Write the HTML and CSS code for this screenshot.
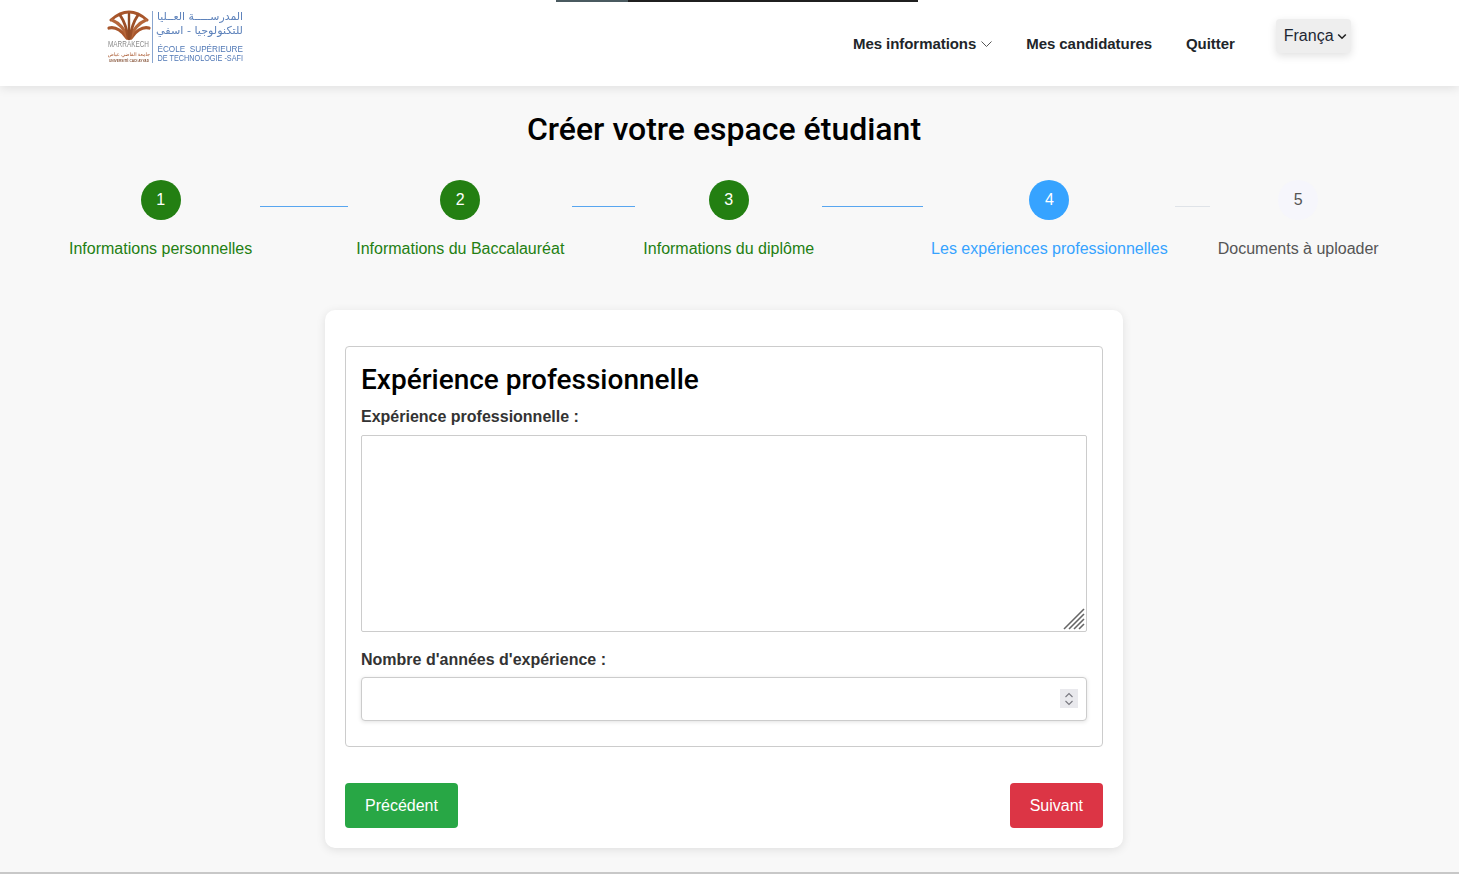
FILE: index.html
```html
<!DOCTYPE html>
<html lang="fr">
<head>
<meta charset="utf-8">
<title>Créer votre espace étudiant</title>
<link rel="stylesheet" href="styles.css">
</head>
<body>
<div class="loader"><span class="loader-a"></span><span class="loader-b"></span></div>
<header class="header">
  <a class="logo" href="#">
    <svg class="logo-svg" width="170" height="56" viewBox="0 0 170 56">
      <g fill="none" stroke-linecap="round">
        <path d="M4 10Q22 -6 40 10" stroke="#a8562c" stroke-width="3"/>
        <path d="M20 28C16 22 9 16 2 18" stroke="#a8562c" stroke-width="3.200"/>
        <path d="M24 28C28 22 35 16 42 18" stroke="#a8562c" stroke-width="3.200"/>
        <path d="M20.500 28C18 20 12 13 5 10" stroke="#b5663a" stroke-width="3"/>
        <path d="M23.500 28C26 20 32 13 39 10" stroke="#b5663a" stroke-width="3"/>
        <path d="M21 28C20 19 17 11 13 5" stroke="#9c4f28" stroke-width="2.800"/>
        <path d="M23 28C24 19 27 11 31 5" stroke="#9c4f28" stroke-width="2.800"/>
        <path d="M22 29V4" stroke="#8f4a25" stroke-width="2.400"/>
      </g>
      <text class="logo-city" x="1" y="37" textLength="41" lengthAdjust="spacingAndGlyphs">MARRAKECH</text>
      <text class="logo-ar" x="22" y="46" text-anchor="middle">جامعة القاضي عياض</text>
      <text class="logo-uca" x="2" y="52" textLength="40" lengthAdjust="spacingAndGlyphs">UNIVERSITÉ CADI AYYAD</text>
      <rect class="logo-sep" x="45" y="1" width="1" height="52"/>
      <text class="logo-ar-line" x="50" y="10" textLength="86" lengthAdjust="spacingAndGlyphs">المدرســـــة العــليا</text>
      <text class="logo-ar-line" x="49" y="23.500" textLength="87" lengthAdjust="spacingAndGlyphs">للتكنولوجيا - اسفي</text>
      <text class="logo-fr" x="50.500" y="41.500" textLength="85.500" lengthAdjust="spacingAndGlyphs">ÉCOLE&#160;&#160;SUPÉRIEURE</text>
      <text class="logo-fr" x="50.500" y="51" textLength="85.500" lengthAdjust="spacingAndGlyphs">DE TECHNOLOGIE -SAFI</text>
    </svg>
  </a>
  <nav class="nav">
    <a class="nav-link" href="#">Mes informations
      <svg class="nav-chevron" width="11" height="8" viewBox="0 0 11 8"><path d="M.5 1.500l5 5 5-5" fill="none" stroke="#555" stroke-width="1"/></svg>
    </a>
    <a class="nav-link" href="#">Mes candidatures</a>
    <a class="nav-link" href="#">Quitter</a>
  </nav>
  <div class="lang">
    <span>França</span>
    <svg width="10" height="7" viewBox="0 0 10 7"><path d="M1.200 1.500L5 5.200l3.800-3.700" fill="none" stroke="#222" stroke-width="1.600"/></svg>
  </div>
</header>
<main class="page">
  <h1 class="title">Créer votre espace étudiant</h1>
  <ol class="stepper">
    <li class="step done"><span class="dot">1</span><span class="step-label">Informations personnelles</span></li>
    <li class="line line-1"></li>
    <li class="step done"><span class="dot">2</span><span class="step-label">Informations du Baccalauréat</span></li>
    <li class="line line-2"></li>
    <li class="step done"><span class="dot">3</span><span class="step-label">Informations du diplôme</span></li>
    <li class="line line-3"></li>
    <li class="step active"><span class="dot">4</span><span class="step-label">Les expériences professionnelles</span></li>
    <li class="line line-4 todo-line"></li>
    <li class="step todo"><span class="dot">5</span><span class="step-label">Documents à uploader</span></li>
  </ol>
  <section class="card">
    <div class="box">
      <h2 class="box-title">Expérience professionnelle</h2>
      <label class="field-label" for="exp">Expérience professionnelle :</label>
      <div class="area-wrap">
        <textarea class="area" id="exp"></textarea>
        <svg class="grip" width="24" height="24" viewBox="0 0 24 24">
          <g stroke="#666" stroke-width="1.600">
            <path d="M2 22L22 2"/><path d="M7 22L22 7"/><path d="M12 22L22 12"/><path d="M17 22L22 17"/>
          </g>
        </svg>
      </div>
      <label class="field-label field-label-2" for="years">Nombre d'années d'expérience :</label>
      <div class="num-wrap">
        <input class="num" id="years" type="text">
        <span class="spin">
          <svg width="10" height="14" viewBox="0 0 10 14"><path d="M1.500 5L5 1.500 8.500 5M1.500 9L5 12.500 8.500 9" fill="none" stroke="#77777f" stroke-width="1.100"/></svg>
        </span>
      </div>
    </div>
    <div class="actions">
      <button class="btn btn-prev" type="button">Précédent</button>
      <button class="btn btn-next" type="button">Suivant</button>
    </div>
  </section>
</main>
<div class="bottom-rule"></div>
</body>
</html>
```
FILE: styles.css
```css
* { box-sizing: border-box; }
html, body { margin: 0; height: 874px; overflow: hidden; }
body {
  position: relative;
  background: #f8f8f8;
  font-family: "Liberation Sans", Arial, sans-serif;
  color: #212529;
}
.loader { position: absolute; top: 0; left: 556px; display: flex; height: 2px; z-index: 5; }
.loader-a { width: 72px; background: #4a5a60; }
.loader-b { width: 290px; background: #1f1f1f; }

.header {
  height: 86px;
  background: #fff;
  box-shadow: 0 2px 10px rgba(0, 0, 0, .1);
  display: flex;
  align-items: flex-start;
  padding-left: 107px;
  position: relative;
}
.logo { display: block; margin-top: 10px; width: 137px; height: 56px; text-decoration: none; }
.logo-svg { display: block; filter: blur(.25px); }
.logo-city { font: 9.500px "Liberation Sans", sans-serif; fill: #8a8a8a; }
.logo-ar { font: 5px "Noto Sans", "DejaVu Sans", sans-serif; fill: #a8562c; }
.logo-uca { font: bold 4px "Liberation Sans", sans-serif; fill: #8a5a40; }
.logo-sep { fill: #8aa6cf; }
.logo-ar-line { font: 11px "DejaVu Sans", sans-serif; fill: #5d82bb; }
.logo-fr { font: 8.500px "Liberation Sans", sans-serif; fill: #4f77b5; }

.nav { display: flex; gap: 34px; margin: 35px 0 0 609px; }
.nav-link {
  font: 700 15px/18px "Liberation Sans", Arial, sans-serif;
  letter-spacing: -.06px;
  color: #212529;
  text-decoration: none;
  display: flex;
  align-items: center;
  gap: 5px;
  white-space: nowrap;
}
.lang {
  width: 75px;
  height: 34px;
  margin: 19px 0 0 41px;
  padding: 0 4px 0 8px;
  background: #eee;
  border-radius: 4px;
  box-shadow: 0 3px 8px rgba(0, 0, 0, .12);
  display: flex;
  align-items: center;
  gap: 3px;
  font-size: 16px;
  color: #1d2733;
  overflow: hidden;
}

.page { width: 1448px; }
.title {
  margin: 24px 0 0;
  font: 500 32px/38px Roboto, sans-serif;
  color: #000;
  text-align: center;
}
.stepper {
  list-style: none;
  margin: 32px 0 0;
  padding: 0 0 0 69px;
  display: flex;
  align-items: flex-start;
}
.step { display: flex; flex-direction: column; align-items: center; flex: none; }
.dot {
  width: 40px;
  height: 40px;
  border-radius: 50%;
  display: flex;
  align-items: center;
  justify-content: center;
  font-size: 16px;
  color: #fff;
}
.step-label { margin-top: 19px; font-size: 16px; line-height: 20px; white-space: nowrap; }
.done .dot { background: #237f12; }
.done .step-label { color: #237f12; }
.active .dot { background: #36a3ff; }
.active .step-label { color: #36a3ff; }
.todo .dot { background: #f6f6fc; color: #555; }
.todo .step-label { color: #555; }
.line { height: 1px; margin: 26px 8px 0; background: #58a6f0; flex: none; }
.line-1 { width: 88px; }
.line-2 { width: 63px; }
.line-3 { width: 101px; }
.line-4 { width: 35px; margin-left: 7px; }
.todo-line { background: #dfe3e8; }

.card {
  width: 798px;
  height: 538px;
  margin: 51px auto 0;
  padding: 36px 20px 20px;
  background: #fff;
  border-radius: 10px;
  box-shadow: 0 2px 10px rgba(0, 0, 0, .1);
}
.box {
  height: 401px;
  padding: 15px;
  border: 1px solid #ccc;
  border-radius: 4px;
}
.box-title { margin: 0; font: 500 28px/36px Roboto, sans-serif; color: #000; }
.field-label { display: block; margin-top: 7px; font: 700 16px/24px "Liberation Sans", Arial, sans-serif; color: #333; }
.field-label-2 { margin-top: 16px; }
.area-wrap { position: relative; margin-top: 6px; height: 197px; }
.area {
  display: block;
  width: 100%;
  height: 100%;
  resize: none;
  border: 1px solid #ccc;
  border-radius: 2px;
  background: #fff;
}
.grip { position: absolute; right: 1px; bottom: 1px; }
.num-wrap { position: relative; margin-top: 5px; height: 44px; }
.num {
  display: block;
  width: 100%;
  height: 100%;
  border: 1px solid #ccc;
  border-radius: 4px;
  background: #fff;
  box-shadow: 0 1px 4px rgba(0, 0, 0, .12);
}
.spin {
  position: absolute;
  right: 9px;
  top: 12px;
  width: 18px;
  height: 19px;
  background: #e9e9ed;
  display: flex;
  align-items: center;
  justify-content: center;
}
.actions { display: flex; justify-content: space-between; margin-top: 36px; }
.btn {
  height: 45px;
  padding: 0 20px;
  border: 0;
  border-radius: 4px;
  color: #fff;
  font: 16px "Liberation Sans", sans-serif;
}
.btn-prev { background: #28a745; }
.btn-next { background: #dc3545; }
.bottom-rule { position: absolute; left: 0; right: 0; bottom: 0; height: 2px; background: #c8c8c8; }
```
